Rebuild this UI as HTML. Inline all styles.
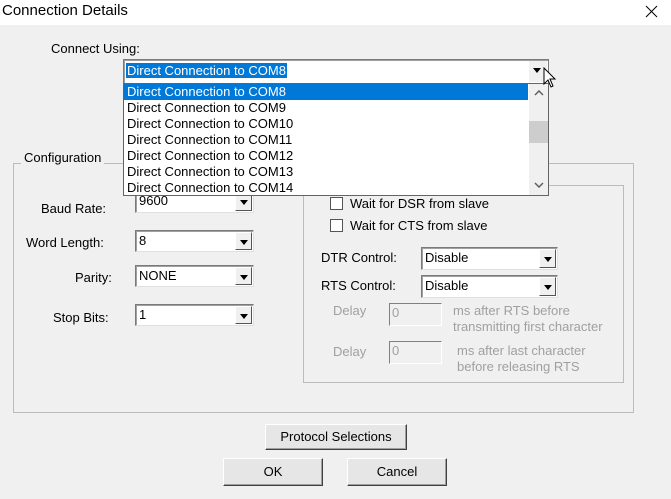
<!DOCTYPE html>
<html><head><style>
*{box-sizing:border-box}
body{margin:0;width:671px;height:499px;background:#f0f0f0;font-family:"Liberation Sans",sans-serif;font-size:13px;color:#000;position:relative;overflow:hidden}
.a{position:absolute;white-space:nowrap}
.title{left:0;top:0;width:671px;height:25px;background:#fff}
.combo{position:absolute;background:#fff;border:1px solid #7a7a7a;border-right-color:#e0e0e0;border-bottom-color:#e0e0e0;box-shadow:inset 1px 1px 0 #a0a0a0}
.combo span{position:absolute;left:3px;top:2px}
.btn{position:absolute;right:1px;top:1px;bottom:1px;width:17px;background:#f0f0f0;border:1px solid;border-color:#fff #555 #555 #fff}
.btn:after{content:"";position:absolute;left:4px;top:7px;border-left:4px solid transparent;border-right:4px solid transparent;border-top:5px solid #000}
.grp{position:absolute;border:1px solid #bcbcbc}
.pb{position:absolute;background:#e6e6e6;border:1px solid;border-color:#fff #404040 #404040 #fff;box-shadow:inset -1px -1px 0 #a0a0a0;text-align:center}
.cb{position:absolute;width:13px;height:13px;background:#fff;border:1px solid #555}
.g{color:#a0a0a0}
.inp{position:absolute;background:#f0f0f0;border:1px solid #808080;border-right-color:#fff;border-bottom-color:#fff;color:#a0a0a0;padding:1px 2px}
.li{position:absolute;left:2px;height:16px;line-height:16px;padding-left:1px;width:401px}
</style></head><body>
<div class="a title"></div>
<div class="a" style="left:2px;top:2px;font-size:15px">Connection Details</div>
<svg class="a" style="left:645px;top:5px" width="13" height="13"><path d="M1 1L12 12M12 1L1 12" stroke="#000" stroke-width="1"/></svg>
<div class="a" style="left:51px;top:41px">Connect Using:</div>

<div class="grp" style="left:13px;top:163px;width:621px;height:250px"></div>
<div class="a" style="left:21px;top:150px;background:#f0f0f0;padding:0 3px">Configuration</div>
<div class="grp" style="left:303px;top:185px;width:321px;height:198px"></div>

<div class="a" style="left:41px;top:201px">Baud Rate:</div>
<div class="combo" style="left:135px;top:190px;width:119px;height:23px"><span>9600</span><div class="btn"></div></div>
<div class="a" style="left:26px;top:235px">Word Length:</div>
<div class="combo" style="left:135px;top:230px;width:119px;height:22px"><span>8</span><div class="btn"></div></div>
<div class="a" style="left:75px;top:270px">Parity:</div>
<div class="combo" style="left:135px;top:265px;width:119px;height:22px"><span>NONE</span><div class="btn"></div></div>
<div class="a" style="left:53px;top:310px">Stop Bits:</div>
<div class="combo" style="left:135px;top:304px;width:119px;height:22px"><span>1</span><div class="btn"></div></div>

<div class="cb" style="left:330px;top:197px"></div><div class="a" style="left:350px;top:196px">Wait for DSR from slave</div>
<div class="cb" style="left:330px;top:219px"></div><div class="a" style="left:350px;top:218px">Wait for CTS from slave</div>
<div class="a" style="left:321px;top:250px">DTR Control:</div>
<div class="combo" style="left:421px;top:247px;width:137px;height:23px"><span>Disable</span><div class="btn"></div></div>
<div class="a" style="left:321px;top:278px">RTS Control:</div>
<div class="combo" style="left:421px;top:275px;width:137px;height:23px"><span>Disable</span><div class="btn"></div></div>
<div class="a g" style="left:333px;top:303px">Delay</div>
<div class="inp" style="left:389px;top:303px;width:53px;height:23px">0</div>
<div class="a g" style="left:453px;top:303px;line-height:16px">ms after RTS before<br>transmitting first character</div>
<div class="a g" style="left:333px;top:344px">Delay</div>
<div class="inp" style="left:389px;top:341px;width:53px;height:23px">0</div>
<div class="a g" style="left:457px;top:343px;line-height:16px">ms after last character<br>before releasing RTS</div>

<div class="pb" style="left:265px;top:424px;width:142px;height:26px;line-height:23px">Protocol Selections</div>
<div class="pb" style="left:223px;top:458px;width:100px;height:28px;line-height:26px">OK</div>
<div class="pb" style="left:347px;top:458px;width:100px;height:28px;line-height:26px">Cancel</div>

<div class="combo" style="left:123px;top:59px;width:426px;height:25px;border-color:#7a7a7a">
 <span style="left:2px;top:3px;background:#0078d7;color:#fff;padding:0 1px">Direct Connection to COM8</span>
 <div class="btn" style="width:18px;border:none;background:#f0f0f0"></div>
</div>
<div style="position:absolute;left:123px;top:83px;width:426px;height:113px;background:#fff;border:1px solid #646464">
 <div class="li" style="top:0;left:0;width:404px;background:#0078d7;color:#fff;padding-left:3px">Direct Connection to COM8</div>
 <div class="li" style="top:16px">Direct Connection to COM9</div>
 <div class="li" style="top:32px">Direct Connection to COM10</div>
 <div class="li" style="top:48px">Direct Connection to COM11</div>
 <div class="li" style="top:64px">Direct Connection to COM12</div>
 <div class="li" style="top:80px">Direct Connection to COM13</div>
 <div class="li" style="top:96px">Direct Connection to COM14</div>
 <div style="position:absolute;right:0;top:0;width:19px;height:111px;background:#f0f0f0">
  <div style="position:absolute;left:0;top:37px;width:19px;height:22px;background:#cdcdcd"></div>
  <svg style="position:absolute;left:5px;top:6px" width="10" height="6"><path d="M1 5L5 1L9 5" stroke="#606060" stroke-width="1.5" fill="none"/></svg>
  <svg style="position:absolute;left:5px;top:98px" width="10" height="6"><path d="M1 1L5 5L9 1" stroke="#606060" stroke-width="1.5" fill="none"/></svg>
 </div>
</div>
<svg class="a" style="left:543px;top:67px" width="14" height="22"><path d="M1 1L1 17L5 13L8 20L10 19L7 12L12 12Z" fill="#fff" stroke="#000" stroke-width="1"/></svg>
</body></html>
